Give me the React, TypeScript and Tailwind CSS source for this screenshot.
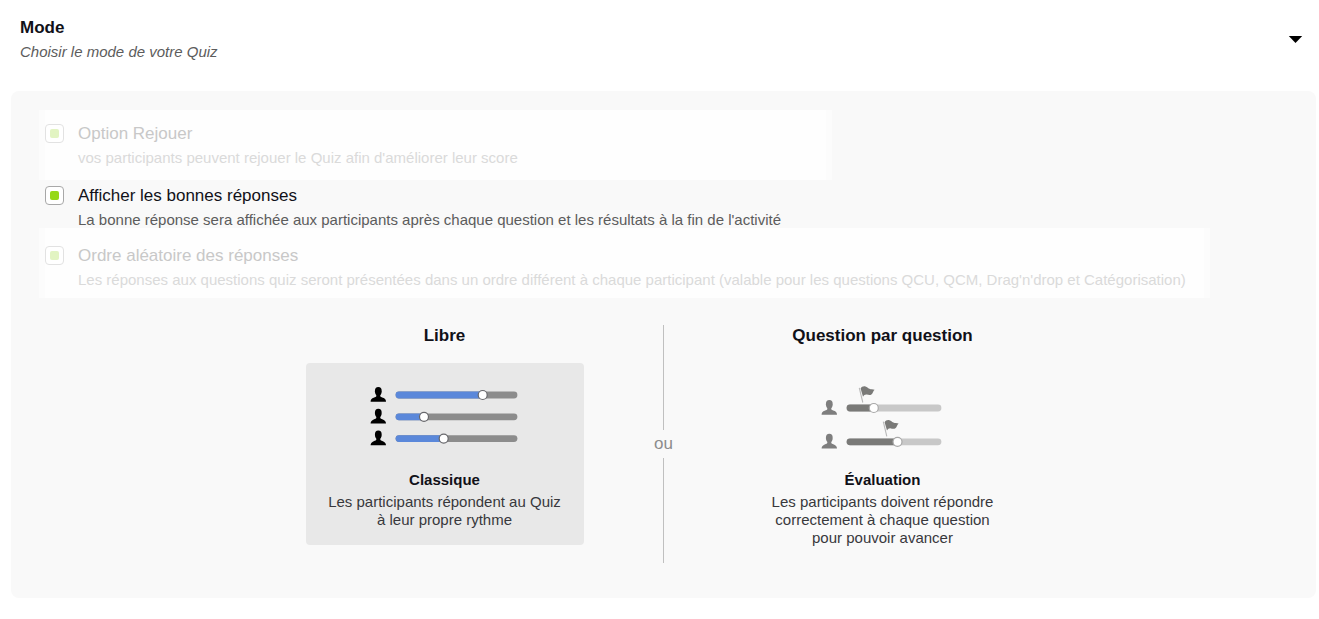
import { useState } from 'react';
import type { ReactNode } from 'react';
import clsx from 'clsx';

type QuizMode = 'classic' | 'evaluation';

interface QuizOption {
  id: string;
  title: string;
  description: string;
  locked: boolean;
  className: string;
}

const options: QuizOption[] = [
  {
    id: 'replay',
    title: 'Option Rejouer',
    description: "vos participants peuvent rejouer le Quiz afin d'améliorer leur score",
    locked: true,
    className: 'w-[793px] pt-2 pb-[14px]',
  },
  {
    id: 'show-answers',
    title: 'Afficher les bonnes réponses',
    description: "La bonne réponse sera affichée aux participants après chaque question et les résultats à la fin de l'activité",
    locked: false,
    className: '',
  },
  {
    id: 'shuffle',
    title: 'Ordre aléatoire des réponses',
    description:
      "Les réponses aux questions quiz seront présentées dans un ordre différent à chaque participant (valable pour les questions QCU, QCM, Drag'n'drop et Catégorisation)",
    locked: true,
    className: 'w-[1171px] pt-3 pb-[10px]',
  },
];

export default function App() {
  const [open, setOpen] = useState(true);
  const [mode, setMode] = useState<QuizMode>('classic');
  const [checked, setChecked] = useState<Record<string, boolean>>({
    replay: true,
    'show-answers': true,
    shuffle: true,
  });

  const toggle = (id: string) => setChecked((prev) => ({ ...prev, [id]: !prev[id] }));

  return (
    <section className="min-h-screen bg-white pb-5 font-['Liberation_Sans',Arial,sans-serif] text-[#111118]">
      <header className="flex items-center justify-between pt-4 pr-4 pb-7 pl-5">
        <div>
          <h2 className="text-[17px] leading-6 font-bold">Mode</h2>
          <p className="text-[15px] leading-[23px] text-[#5c5c5c] italic">Choisir le mode de votre Quiz</p>
        </div>
        <button type="button" aria-label="Mode" aria-expanded={open} onClick={() => setOpen(!open)}>
          <svg width="15" height="9" viewBox="0 0 15 9" className={clsx(!open && '-rotate-90')}>
            <path d="M0.8 1H14.2L7.5 8Z" fill="#000" />
          </svg>
        </button>
      </header>

      {open && (
        <div className="mr-[3px] ml-[11px] rounded-lg bg-[#f9f9f9] px-7 pt-[19px] pb-[35px]">
          <div className="flex flex-col items-start">
            {options.map((option) => (
              <OptionRow
                key={option.id}
                option={option}
                checked={checked[option.id]}
                onToggle={() => toggle(option.id)}
              />
            ))}
          </div>

          <div className="mt-[27px] flex justify-center gap-[70px]">
            <ModeColumn
              heading="Libre"
              name="Classique"
              selected={mode === 'classic'}
              onSelect={() => setMode('classic')}
              drawing={<ClassicDrawing />}
            >
              Les participants répondent au Quiz à leur propre rythme
            </ModeColumn>

            <div className="flex w-5 flex-col items-center">
              <div className="w-px flex-1 bg-[#c0c0c0]" />
              <span className="text-[17px] leading-7 text-[#8c8c8c]">ou</span>
              <div className="w-px flex-1 bg-[#c0c0c0]" />
            </div>

            <ModeColumn
              heading="Question par question"
              name="Évaluation"
              selected={mode === 'evaluation'}
              onSelect={() => setMode('evaluation')}
              drawing={<EvaluationDrawing />}
            >
              Les participants doivent répondre correctement à chaque question pour pouvoir avancer
            </ModeColumn>
          </div>
        </div>
      )}
    </section>
  );
}

function OptionRow({ option, checked, onToggle }: { option: QuizOption; checked: boolean; onToggle: () => void }) {
  const { id, title, description, locked, className } = option;
  return (
    <div
      className={clsx(
        'flex max-w-full gap-[14px] border-x-[6px] pr-px',
        locked ? 'border-[#fcfcfc] bg-[#fefefe]' : 'border-transparent',
        className
      )}
    >
      <input
        id={id}
        type="checkbox"
        checked={checked}
        onChange={onToggle}
        disabled={locked}
        className={clsx(
          'mt-[6px] grid size-[19px] shrink-0 appearance-none place-content-center rounded-[4px] border bg-white before:block before:size-[9px] before:rounded-[2px]',
          locked ? 'border-[#e2e2e2] checked:before:bg-[#e2f4c2]' : 'border-[#a8a8a8] checked:before:bg-[#95d818]'
        )}
      />
      <label htmlFor={id}>
        <span className={clsx('block text-[17px] leading-8', locked && 'text-[#c8c8c8]')}>{title}</span>
        <span className={clsx('block text-[15px] leading-4', locked ? 'text-[#dadada]' : 'text-[#5c5c5c]')}>
          {description}
        </span>
      </label>
    </div>
  );
}

interface ModeColumnProps {
  heading: string;
  name: string;
  selected: boolean;
  onSelect: () => void;
  drawing: ReactNode;
  children: ReactNode;
}

function ModeColumn({ heading, name, selected, onSelect, drawing, children }: ModeColumnProps) {
  return (
    <div className="flex w-[278px] flex-col items-stretch pb-4">
      <h3 className="mb-4 text-center text-[17px] leading-[22px] font-bold">{heading}</h3>
      <button
        type="button"
        aria-pressed={selected}
        onClick={onSelect}
        className={clsx(
          'flex min-h-[182px] flex-col items-center rounded-[4px] px-5 pt-[22px] text-[15px] leading-[18px]',
          selected && 'bg-[#e8e8e8]'
        )}
      >
        {drawing}
        <span className="mt-[22px] font-bold">{name}</span>
        <span className="mt-1 text-[#38383c]">{children}</span>
      </button>
    </div>
  );
}

function Person({ y, fill }: { y: number; fill: string }) {
  return (
    <g transform={`translate(0 ${y})`} fill={fill}>
      <ellipse cx="8.3" cy="-3.8" rx="3.4" ry="4.2" />
      <path d="M6.3-1.5H10.3V1.2C11 2.2 12.6 2.5 13.8 3.1C15.3 3.9 16 5.2 16 6.7H.6C.6 5.2 1.3 3.9 2.8 3.1C4 2.5 5.6 2.2 6.3 1.2Z" />
    </g>
  );
}

interface TrackProps {
  y: number;
  start: number;
  end: number;
  at: number;
  done: string;
  rest: string;
  ring: string;
}

function Track({ y, start, end, at, done, rest, ring }: TrackProps) {
  return (
    <g strokeWidth="6.8" strokeLinecap="round">
      <path d={`M${start} ${y}H${end}`} stroke={rest} />
      <path d={`M${start} ${y}H${at - 3}`} stroke={done} />
      <circle cx={at} cy={y} r="4.5" fill="#fff" stroke={ring} strokeWidth="1.2" />
    </g>
  );
}

function Flag({ x, y }: { x: number; y: number }) {
  return (
    <g transform={`translate(${x} ${y})`}>
      <path d="M.5 .8L4 15.5" stroke="#b8b8b8" strokeWidth="1.1" />
      <path
        fill="#7a7a78"
        d="M1.8 1.4C2.8-.4 4.6-1.1 6.7-.6C8.4-.2 8.9 1.1 10.6 1.8C12.2 2.5 14 2.3 15.8 2.8C14.4 4 14.2 6.3 12.6 7.5C11.2 8.5 9.6 7.9 8 7.6C6.2 7.3 5.2 8.3 4.2 9.7Z"
      />
    </g>
  );
}

function ClassicDrawing() {
  const rows = [
    { y: 10, at: 112.7 },
    { y: 31.8, at: 54 },
    { y: 53.6, at: 73.7 },
  ];
  return (
    <svg width="150" height="64" viewBox="0 0 150 64" fill="none" className="shrink-0">
      {rows.map(({ y, at }) => (
        <g key={y}>
          <Person y={y} fill="#000" />
          <Track y={y} start={29} end={144} at={at} done="#5b88da" rest="#8c8c8c" ring="#68686c" />
        </g>
      ))}
    </svg>
  );
}

function EvaluationDrawing() {
  const rows = [
    { y: 23, at: 52.8, flagX: 37.8 },
    { y: 56.8, at: 76.5, flagX: 61.8 },
  ];
  return (
    <svg width="124" height="64" viewBox="0 0 124 64" fill="none" className="shrink-0">
      {rows.map(({ y, at, flagX }) => (
        <g key={y}>
          <Person y={y} fill="#7e7e7e" />
          <Track y={y} start={29} end={117} at={at} done="#7a7a78" rest="#c8c8c8" ring="#a8a8a8" />
          <Flag x={flagX} y={y - 21} />
        </g>
      ))}
    </svg>
  );
}
